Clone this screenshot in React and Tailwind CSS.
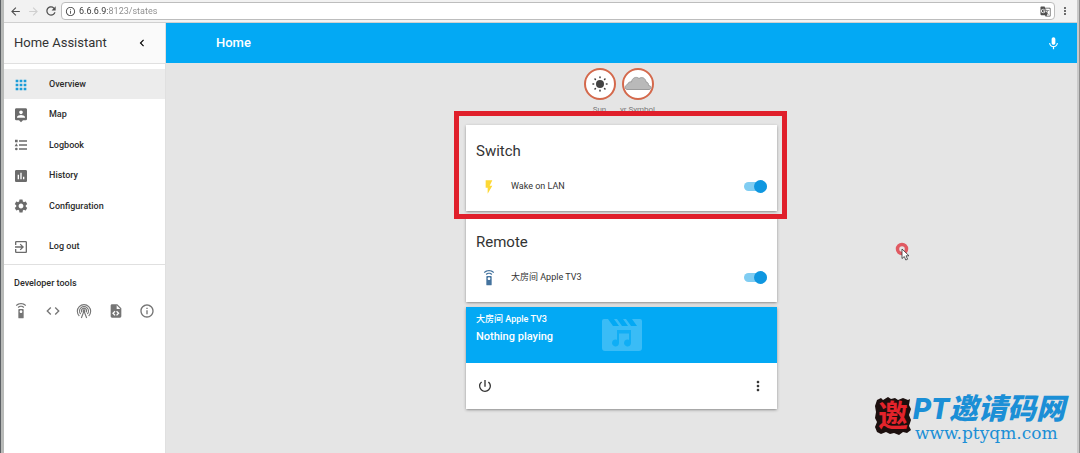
import React from 'react';
import {
  MdApps, MdArrowBack, MdArrowForward, MdAssessment, MdChevronLeft, MdCode, MdExitToApp, MdFlashOn,
  MdGTranslate, MdInfoOutline, MdMic, MdMoreVert, MdPowerSettingsNew,
  MdRefresh, MdSettings, MdSettingsRemote,
} from 'react-icons/md';

function AccountLocationIcon({ size }) {
  return (
    <svg width={size} height={size} viewBox="0 0 24 24" fill="currentColor">
      <path d="M18,16H6V15.1C6,13.1 10,12 12,12C14,12 18,13.1 18,15.1M12,5.3C13.5,5.3 14.7,6.5 14.7,8C14.7,9.5 13.5,10.7 12,10.7C10.5,10.7 9.3,9.5 9.3,8C9.3,6.5 10.5,5.3 12,5.3M19,2H5C3.89,2 3,2.89 3,4V18A2,2 0 0,0 5,20H9L12,23L15,20H19A2,2 0 0,0 21,18V4C21,2.89 20.1,2 19,2Z" />
    </svg>
  );
}

function ListTypeIcon({ size }) {
  return (
    <svg width={size} height={size} viewBox="0 0 24 24" fill="currentColor">
      <path d="M5,9.5L7.5,14H2.5L5,9.5M3,4H7V8H3V4M5,20A2,2 0 0,0 7,18A2,2 0 0,0 5,16A2,2 0 0,0 3,18A2,2 0 0,0 5,20M9,5V7H21V5H9M9,19H21V17H9V19M9,11V13H21V11H9Z" />
    </svg>
  );
}

function RadioTowerIcon({ size }) {
  return (
    <svg width={size} height={size} viewBox="0 0 24 24" fill="none" stroke="currentColor" strokeWidth="1.7">
      <path d="M5 19.5A10 10 0 1 1 19 19.5" />
      <path d="M7 16.5A6.7 6.7 0 1 1 17 16.5" />
      <path d="M9 14A3.8 3.8 0 1 1 15 14" />
      <path d="M8 22.5L12 12L16 22.5" />
      <circle cx="12" cy="11.5" r="1.2" fill="currentColor" />
    </svg>
  );
}

function FileCodeIcon({ size }) {
  return (
    <svg width={size} height={size} viewBox="0 0 24 24" fill="currentColor">
      <path d="M13,9H18.5L13,3.5V9M6,2H14L20,8V20A2,2 0 0,1 18,22H6C4.89,22 4,21.1 4,20V4C4,2.89 4.89,2 6,2M6.12,15.5L9.86,19.24L11.28,17.83L8.95,15.5L11.28,13.17L9.86,11.76L6.12,15.5M17.28,15.5L13.54,11.76L12.12,13.17L14.45,15.5L12.12,17.83L13.54,19.24L17.28,15.5Z" />
    </svg>
  );
}

function ClapperIcon() {
  return (
    <svg className="w-10 h-8" viewBox="0 0 40 32">
      <path fill="#fff" fillOpacity="0.22" d="M2 0H6L11 7H17L12 0H15L20 7H26L21 0H24L29 7H35L30 0H38A2 2 0 0 1 40 2V29A3 3 0 0 1 37 32H3A3 3 0 0 1 0 29V2A2 2 0 0 1 2 0Z" />
      <path fill="#03a9f4" fillOpacity="0.75" d="M15 11H29V24A3.5 3.5 0 1 1 27 20.8V14.5H17V24A3.5 3.5 0 1 1 15 20.8Z" />
    </svg>
  );
}

function SunIcon() {
  return (
    <svg className="w-4 h-4" viewBox="0 0 16 16" fill="#424242">
      <circle cx="8" cy="8" r="4" />
      <g stroke="#424242" strokeWidth="1.6" strokeLinecap="round">
        <path d="M8 1V1.6M8 14.4V15M1 8H1.6M14.4 8H15M3 3L3.4 3.4M12.6 12.6L13 13M3 13L3.4 12.6M12.6 3.4L13 3" />
      </g>
    </svg>
  );
}

function CloudIcon() {
  return (
    <svg className="w-7 h-4 shrink-0" viewBox="0 0 28 16">
      <path fill="#b9b9b9" stroke="#9b9b9b" strokeWidth="1" d="M3 13.5C0.5 13 0.5 9.5 3.5 8.5C4 6.5 6 5.5 7.5 6C8 2 12 0 15 2.5C18 0.5 21.5 2 22 6C24 6 24.5 8 24.5 9.5C28 10 28 13 25 13.5Z" />
    </svg>
  );
}

const menu = [
  { label: 'Overview', icon: MdApps, active: true },
  { label: 'Map', icon: AccountLocationIcon },
  { label: 'Logbook', icon: ListTypeIcon },
  { label: 'History', icon: MdAssessment },
  { label: 'Configuration', icon: MdSettings },
];

const devTools = [
  { label: 'Services', icon: MdSettingsRemote },
  { label: 'States', icon: MdCode },
  { label: 'Events', icon: RadioTowerIcon },
  { label: 'Templates', icon: FileCodeIcon },
  { label: 'Info', icon: MdInfoOutline },
];

function MenuLink({ label, icon: Icon, active }) {
  return (
    <a href="#" className={`flex items-center min-h-[30px] pt-px pl-[9px] text-[9px] font-medium text-[#2b2b2b] ${active ? 'bg-[#ececec]' : ''}`}>
      <span className={`w-9 ${active ? 'text-[#1a9cd8]' : 'text-[#6b6b6b]'}`}><Icon size={16} /></span>
      {label}
    </a>
  );
}

function BrowserBar() {
  return (
    <div className="flex items-center h-[23px] pl-0.5 pr-1.5 bg-[#f2f2f2] border-b border-[#d0d0d0] text-[#4f4f4f]">
      <button aria-label="Back" className="w-[18px] flex justify-center"><MdArrowBack size={13} /></button>
      <button aria-label="Forward" className="w-[18px] flex justify-center text-[#cfcfcf]"><MdArrowForward size={13} /></button>
      <button aria-label="Reload" className="w-[18px] flex justify-center"><MdRefresh size={14} /></button>
      <div className="flex items-center flex-1 h-[18px] ml-px px-[3px] gap-[3px] bg-white border border-[#bdbdbd] rounded-sm">
        <MdInfoOutline size={11} />
        <input
          type="text"
          aria-label="Address"
          defaultValue="6.6.6.9:8123/states"
          className="flex-1 min-w-0 text-[9px] leading-4 outline-none text-transparent bg-clip-text bg-[linear-gradient(90deg,#333_29px,#8a8a8a_29px)]"
        />
        <MdGTranslate size={11} />
      </div>
      <button aria-label="Browser menu" className="ml-1"><MdMoreVert size={12} /></button>
    </div>
  );
}

function Sidebar() {
  return (
    <aside className="w-[162px] shrink-0 bg-white border-r border-[#e0e0e0]">
      <div className="flex items-center justify-between h-[41px] pl-2.5 pr-4 bg-[#fafafa] border-b border-[#e0e0e0]">
        <h1 className="text-[13px] text-[#333]">Home Assistant</h1>
        <button aria-label="Close menu"><MdChevronLeft size={14} /></button>
      </div>
      <nav className="grid grid-rows-5 mt-[5px] h-[152px]">
        {menu.map(m => <MenuLink key={m.label} {...m} />)}
      </nav>
      <div className="pt-2.5 pb-[3px] border-b border-[#e0e0e0]">
        <MenuLink label="Log out" icon={MdExitToApp} />
      </div>
      <h2 className="pl-2.5 pt-3 text-[9px] leading-3 font-medium text-[#2b2b2b]">Developer tools</h2>
      <div className="flex justify-between pl-[9px] pr-2.5 mt-3.5 text-[#757575]">
        {devTools.map(({ label, icon: Icon }) => (
          <a key={label} href="#" aria-label={label}><Icon size={16} /></a>
        ))}
      </div>
    </aside>
  );
}

function Badge({ label, children }) {
  return (
    <div className="flex flex-col items-center w-[38px]">
      <div className="flex items-center justify-center w-8 h-8 rounded-full bg-white border-2 border-[#d4694c]">{children}</div>
      <span className="mt-1 text-[8px] leading-3 whitespace-nowrap text-[#777]">{label}</span>
    </div>
  );
}

function EntityCard({ title, name, icon, highlighted }) {
  return (
    <section className="relative px-2.5 pt-4 pb-[15px] bg-white shadow-sm shadow-black/30">
      <h2 className="text-[15px] leading-5 text-[#333]">{title}</h2>
      <label className="flex items-center h-5 mt-[15px] pt-px pl-[5px] text-[9px] text-[#333]">
        <span className="w-[30px]">{icon}</span>
        <span className="flex-1">{name}</span>
        <input
          type="checkbox"
          defaultChecked
          className="appearance-none relative w-[23px] h-[9px] rounded-full bg-[#80cdf2] before:absolute before:-top-0.5 before:right-0 before:w-[13px] before:h-[13px] before:rounded-full before:bg-[#0f97e0]"
        />
      </label>
      {highlighted && <div className="absolute z-10 -top-[14px] -bottom-2 -left-3 -right-2.5 border-5 border-[#e01f2b] pointer-events-none" />}
    </section>
  );
}

function MediaCard() {
  return (
    <section className="bg-white shadow-sm shadow-black/30">
      <div className="relative h-14 px-2.5 pt-1 bg-[#03a9f4] text-white font-medium">
        <div className="text-[9px] leading-4">大房间 Apple TV3</div>
        <div className="text-[11px] leading-5">Nothing playing</div>
        <div className="absolute inset-0 flex items-center justify-center"><ClapperIcon /></div>
      </div>
      <div className="flex items-center justify-between h-[46px] px-[11px] text-[#333]">
        <button aria-label="Power"><MdPowerSettingsNew size={16} /></button>
        <button aria-label="More"><MdMoreVert size={16} /></button>
      </div>
    </section>
  );
}

function Watermark() {
  return (
    <div className="absolute right-3 bottom-3 flex items-end gap-0.5 text-[#1b8fd6]">
      <div className="relative w-9 h-[38px] mb-1.5 flex items-center justify-center">
        <svg className="absolute inset-0 w-full h-full" viewBox="0 0 36 38">
          <path fill="#1c0f0e" d="M2 3L6 1L8 3L13 0L16 2L20 1L23 3L28 1L33 3L35 2L34 8L36 12L34 18L36 23L34 29L36 33L32 36L28 35L24 38L19 36L15 37L11 35L6 37L2 35L0 30L2 25L0 21L1 15L0 9Z" />
        </svg>
        <span className="relative text-[30px] leading-8 font-bold text-[#e3232b]">邀</span>
      </div>
      <div className="flex flex-col items-start">
        <span className="text-[29px] leading-8 font-black italic whitespace-nowrap">PT邀请码网</span>
        <a href="#" className="pl-0.5 font-['DejaVu_Serif',serif] text-[17px] leading-4">www.ptyqm.com</a>
      </div>
    </div>
  );
}

function Pointer() {
  return (
    <svg className="absolute top-[242px] left-[83%] w-4 h-5" viewBox="0 0 16 20">
      <circle cx="7" cy="7" r="4.5" fill="none" stroke="#e05a62" strokeWidth="3.5" />
      <path d="M7 7V16.5L9.3 14.5L10.8 18L12.6 17.2L11 13.8H14Z" fill="#fff" stroke="#333" strokeWidth="0.8" />
    </svg>
  );
}

export default function App() {
  return (
    <div className="flex min-h-screen border-l border-r border-l-[#5c6064] border-r-[#8f8f8f] font-[Roboto,'Noto_Sans_CJK_SC',sans-serif]">
      <div className="relative flex flex-col flex-1 border-l-3 border-r-2 border-l-[#b8bab8] border-r-[#c9c9c9] bg-[#e5e5e5]">
        <BrowserBar />
        <div className="flex flex-1">
          <Sidebar />
          <div className="flex-1 min-w-0">
            <header className="flex items-center justify-between h-10 pl-[50px] pr-4 bg-[#03a9f4] text-white">
              <span className="text-[13px] font-medium">Home</span>
              <button aria-label="Voice"><MdMic size={15} /></button>
            </header>
            <main className="pt-[5px] pb-11">
              <div className="flex justify-center h-[57px] pr-1.5">
                <Badge label="Sun"><SunIcon /></Badge>
                <Badge label="yr Symbol"><CloudIcon /></Badge>
              </div>
              <div className="flex flex-col gap-[5px] w-full max-w-[311px] mx-auto">
                <EntityCard title="Switch" name="Wake on LAN" icon={<MdFlashOn size={16} className="text-[#fdd835]" />} highlighted />
                <EntityCard title="Remote" name="大房间 Apple TV3" icon={<MdSettingsRemote size={16} className="text-[#44739e]" />} />
                <MediaCard />
              </div>
            </main>
          </div>
        </div>
        <Pointer />
        <Watermark />
      </div>
    </div>
  );
}
